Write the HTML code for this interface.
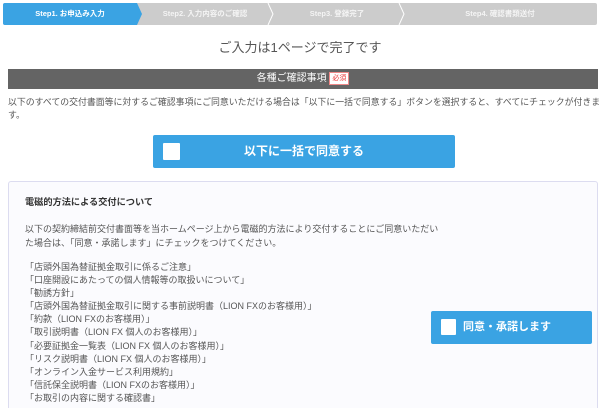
<!DOCTYPE html>
<html><head><meta charset="utf-8"><style>
*{margin:0;padding:0;box-sizing:border-box}
html,body{width:600px;height:408px;overflow:hidden}
body{background:#fff;font-family:"Liberation Sans","Noto Sans CJK JP",sans-serif;color:#444;position:relative}
.steps{position:absolute;left:3px;top:3px;width:594px;height:22px;background:#ccc;border-radius:2px}
.st{position:absolute;top:0;height:22px;line-height:22px;color:#fff;font-size:7.5px;font-weight:bold;text-align:center}
.sep{position:absolute;top:0;width:0;height:0;border-top:11px solid transparent;border-bottom:11px solid transparent}
.abs{position:absolute}
</style></head><body>
<div class="steps">
 <div class="abs" style="left:0;top:0;width:134px;height:22px;background:#3aa3e3;border-radius:2px 0 0 2px"></div>
 <div class="sep" style="left:134px;border-left:5px solid #3aa3e3"></div>
 <svg class="abs" style="left:264px;top:0" width="8" height="22"><polyline points="1,0 6,11 1,22" fill="none" stroke="#fff" stroke-width="1"/></svg>
 <svg class="abs" style="left:395px;top:0" width="8" height="22"><polyline points="1,0 6,11 1,22" fill="none" stroke="#fff" stroke-width="1"/></svg>
 <div class="st" style="left:0;width:134px">Step1. お申込み入力</div>
 <div class="st" style="left:138px;width:128px;color:#f4f4f4">Step2. 入力内容のご確認</div>
 <div class="st" style="left:270px;width:128px;color:#f4f4f4">Step3. 登録完了</div>
 <div class="st" style="left:400px;width:194px;color:#f4f4f4">Step4. 確認書類送付</div>
</div>
<div class="abs" style="left:0;top:37px;width:600px;text-align:center;font-size:13px;color:#555">ご入力は1ページで完了です</div>
<div class="abs" style="left:8px;top:69px;width:590px;height:20px;background:#646464;color:#fff;font-size:10px;line-height:20px;text-align:center">各種ご確認事項 <span style="display:inline-block;background:#fff;color:#e33;font-size:7px;line-height:11px;padding:0 2px;border:1px solid #e88;vertical-align:1px">必須</span></div>
<div class="abs" style="left:8px;top:96px;width:600px;font-size:8.9px;line-height:13px;color:#555;white-space:nowrap">以下のすべての交付書面等に対するご確認事項にご同意いただける場合は「以下に一括で同意する」ボタンを選択すると、すべてにチェックが付きま<br>す。</div>
<div class="abs" style="left:153px;top:135px;width:302px;height:33px;background:#3aa3e3;border-radius:2px"></div>
<div class="abs" style="left:163px;top:143px;width:17px;height:17px;background:#fff;border-radius:1px"></div>
<div class="abs" style="left:153px;top:135px;width:302px;height:33px;line-height:33px;text-align:center;color:#fff;font-size:12px;font-weight:bold">以下に一括で同意する</div>
<div class="abs" style="left:8px;top:181px;width:590px;height:240px;background:#fbfbfe;border:1px solid #dcdcf0;border-radius:3px"></div>
<div class="abs" style="left:25px;top:194px;font-size:9.2px;font-weight:bold;color:#333">電磁的方法による交付について</div>
<div class="abs" style="left:25px;top:222px;width:415px;font-size:9px;line-height:14px;color:#555">以下の契約締結前交付書面等を当ホームページ上から電磁的方法により交付することにご同意いただいた場合は、「同意・承諾します」にチェックをつけてください。</div>
<div class="abs" style="left:25px;top:261px;font-size:9px;line-height:13.1px;color:#555;white-space:nowrap">「店頭外国為替証拠金取引に係るご注意」<br>「口座開設にあたっての個人情報等の取扱いについて」<br>「勧誘方針」<br>「店頭外国為替証拠金取引に関する事前説明書（LION FXのお客様用）」<br>「約款（LION FXのお客様用）」<br>「取引説明書（LION FX 個人のお客様用）」<br>「必要証拠金一覧表（LION FX 個人のお客様用）」<br>「リスク説明書（LION FX 個人のお客様用）」<br>「オンライン入金サービス利用規約」<br>「信託保全説明書（LION FXのお客様用）」<br>「お取引の内容に関する確認書」</div>
<div class="abs" style="left:431px;top:311px;width:161px;height:33px;background:#3aa3e3;border-radius:2px"></div>
<div class="abs" style="left:441px;top:319px;width:15px;height:16px;background:#fff;border-radius:1px"></div>
<div class="abs" style="left:463px;top:311px;line-height:33px;color:#fff;font-size:11px;font-weight:bold">同意・承諾します</div>
</body></html>
